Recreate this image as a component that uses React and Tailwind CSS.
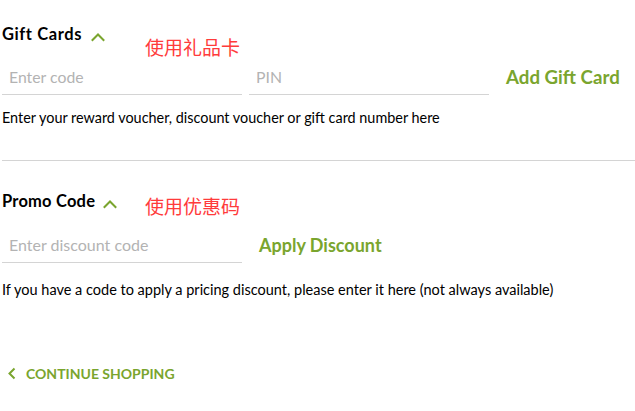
import React from "react";

const Chevron = ({ className }) => (
  <svg viewBox="0 0 14 10" className={className} fill="none" stroke="#7aa52e" strokeWidth="2" strokeLinecap="square">
    <path d="M1.5 8 L7 2.5 L12.5 8" />
  </svg>
);

export default function App() {
  return (
    <div className="w-[635px] h-[411px] bg-white text-black font-['Lato',sans-serif] relative overflow-hidden">
      <div className="relative pt-[25px]">
        <div className="flex items-center pl-[2px] h-[18px]">
          <span className="text-[16.5px] tracking-[0.6px] font-bold leading-none">Gift Cards</span>
          <Chevron className="w-[14px] h-[10px] ml-[9px] mt-[5px]" />
        </div>
        <span className="absolute left-[145px] top-[37px] text-[19px] leading-none text-[#ff3b3b] font-['Noto_Sans_CJK_SC',sans-serif]">使用礼品卡</span>
        <div className="flex items-end mt-[17px] pl-[2px]">
          <div className="w-[240px] h-[35px] border-b border-[#d4d4d4] flex items-center pl-[7px] text-[15.8px] text-[#b3b3b3]">Enter code</div>
          <div className="w-[240px] h-[35px] ml-[7px] border-b border-[#d4d4d4] flex items-center pl-[7px] text-[15.8px] text-[#b3b3b3]">PIN</div>
          <div className="h-[35px] ml-[17px] flex items-center text-[18.7px] font-bold text-[#7aa52e]">Add Gift Card</div>
        </div>
        <p className="pl-[2px] mt-[16px] text-[14.4px] leading-none">Enter your reward voucher, discount voucher or gift card number here</p>
        <div className="ml-[2px] mt-[35px] border-t border-[#d4d4d4]"></div>
      </div>

      <div className="relative pt-[31px]">
        <div className="flex items-center pl-[2px] h-[18px]">
          <span className="text-[16.5px] tracking-[0.2px] font-bold leading-none">Promo Code</span>
          <Chevron className="w-[14px] h-[10px] ml-[8px] mt-[6px]" />
        </div>
        <span className="absolute left-[145px] top-[35px] text-[19px] leading-none text-[#ff3b3b] font-['Noto_Sans_CJK_SC',sans-serif]">使用优惠码</span>
        <div className="flex items-end mt-[18px] pl-[2px]">
          <div className="w-[240px] h-[35px] border-b border-[#d4d4d4] flex items-center pl-[7px] text-[16px] text-[#b3b3b3]">Enter discount code</div>
          <div className="h-[35px] ml-[17px] flex items-center text-[18px] font-bold text-[#7aa52e]">Apply Discount</div>
        </div>
        <p className="pl-[2px] mt-[20px] text-[14.5px] leading-none">If you have a code to apply a pricing discount, please enter it here (not always available)</p>
      </div>

      <div className="flex items-center pl-[8px] mt-[69px]">
        <svg viewBox="0 0 8 12" className="w-[8px] h-[13px]" fill="none" stroke="#7aa52e" strokeWidth="2">
          <path d="M6.5 1 L1.5 6 L6.5 11" />
        </svg>
        <span className="ml-[10px] text-[14px] font-bold text-[#7aa52e] leading-none">CONTINUE SHOPPING</span>
      </div>
    </div>
  );
}
